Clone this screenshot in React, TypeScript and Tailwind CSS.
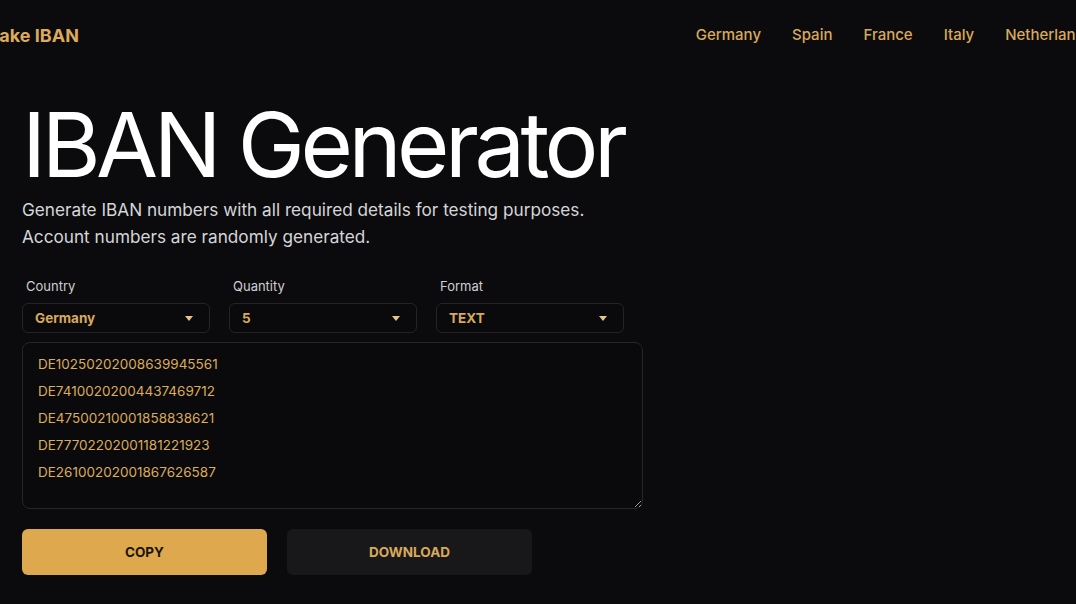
import { useState } from 'react';

const countries = ['Germany', 'Spain', 'France', 'Italy', 'Netherlands'];

const ibans = [
  'DE10250202008639945561',
  'DE74100202004437469712',
  'DE47500210001858838621',
  'DE77702202001181221923',
  'DE26100202001867626587',
];

const Caret = () => (
  <svg width="8" height="5" viewBox="0 0 8 5" className="shrink-0">
    <path d="M0 0h8L4 5z" fill="#e6c48a" />
  </svg>
);

const Select = ({ label, value }: { label: string; value: string }) => (
  <div className="flex flex-col pr-[19px]">
    <span className="pl-1 text-[13px] leading-[18px] text-[#cfcfd2]">{label}</span>
    <div className="mt-2 flex h-[30px] items-center justify-between rounded-md border border-[#242427] bg-[#0a0a0c] pl-3 pr-4">
      <span className="text-[13.5px] font-bold text-[#d9a95c]">{value}</span>
      <Caret />
    </div>
  </div>
);

export default function App() {
  const [text] = useState(ibans.join('\n'));

  return (
    <div className="min-h-screen overflow-hidden bg-[#0b0b0d] font-['Inter','Liberation_Sans',sans-serif]">
      {/* top bar */}
      <header className="flex h-[70px] items-center justify-between">
        <span className="-ml-[11px] text-[18px] font-bold text-[#dcaa5c]">Fake IBAN</span>
        <nav className="-mr-[17px] flex items-center gap-[31px] text-[15px] font-medium text-[#d9a95c]">
          {countries.map((c) => (
            <span key={c}>{c}</span>
          ))}
        </nav>
      </header>

      <main className="w-[643px] pl-[22px] pt-[30px]">
        <h1 className="text-[90px] font-normal leading-none tracking-[-0.05em] text-white">IBAN Generator</h1>
        <p className="mt-[6px] text-[17.2px] leading-[27px] text-[#d6d6d9]">
          Generate IBAN numbers with all required details for testing purposes.
          <br />
          Account numbers are randomly generated.
        </p>

        <div className="mt-[27px] grid grid-cols-3">
          <Select label="Country" value="Germany" />
          <Select label="Quantity" value="5" />
          <Select label="Format" value="TEXT" />
        </div>

        <textarea
          readOnly
          value={text}
          className="mt-[9px] block h-[167px] w-full resize-y rounded-lg border border-[#262629] bg-[#0a0a0c] px-[15px] pt-[8px] text-[13.5px] leading-[27px] text-[#dbab5e] outline-none"
        />

        <div className="mt-5 flex gap-5">
          <button className="h-[46px] w-[245px] rounded-md bg-[#dea84e] text-[13.5px] font-bold text-[#1a1408]">COPY</button>
          <button className="h-[46px] w-[245px] rounded-md bg-[#18181b] text-[13.5px] font-bold text-[#d9a95c]">DOWNLOAD</button>
        </div>
      </main>
    </div>
  );
}
